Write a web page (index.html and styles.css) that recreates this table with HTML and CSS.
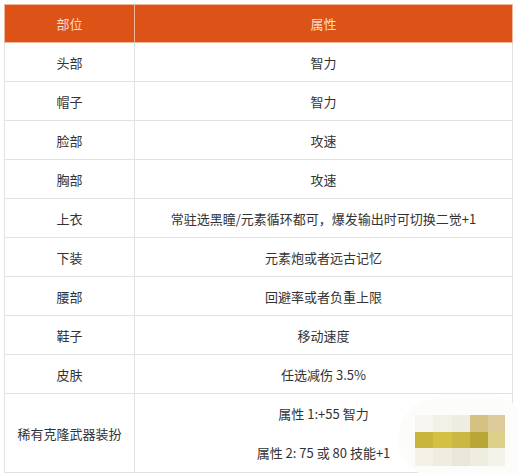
FILE: index.html
```html
<!DOCTYPE html>
<html lang="zh">
<head>
<meta charset="utf-8">
<title>装扮属性</title>
<link rel="stylesheet" href="styles.css">
</head>
<body>
<div class="wrap">
  <table class="attr">
    <thead>
      <tr><th class="c1">部位</th><th class="c2">属性</th></tr>
    </thead>
    <tbody>
      <tr><td>头部</td><td>智力</td></tr>
      <tr><td>帽子</td><td>智力</td></tr>
      <tr><td>脸部</td><td>攻速</td></tr>
      <tr><td>胸部</td><td>攻速</td></tr>
      <tr><td>上衣</td><td>常驻选黑瞳/元素循环都可，爆发输出时可切换二觉+1</td></tr>
      <tr><td>下装</td><td>元素炮或者远古记忆</td></tr>
      <tr><td>腰部</td><td>回避率或者负重上限</td></tr>
      <tr><td>鞋子</td><td>移动速度</td></tr>
      <tr><td>皮肤</td><td>任选减伤 3.5%</td></tr>
      <tr class="tall"><td>稀有克隆武器装扮</td><td><div class="line">属性 1:+55 智力</div><div class="line">属性 2: 75 或 80 技能+1</div></td></tr>
    </tbody>
  </table>
  <div class="blob"></div>
  <div class="mosaic">
    <span class="m m1"></span><span class="m m2"></span><span class="m m3"></span><span class="m m4"></span><span class="m m5"></span>
    <span class="m m6"></span><span class="m m7"></span><span class="m m8"></span><span class="m m9"></span><span class="m m10"></span>
    <span class="m m11"></span><span class="m m12"></span><span class="m m13"></span><span class="m m14"></span><span class="m m15"></span>
  </div>
</div>
</body>
</html>
```
FILE: styles.css
```css
html, body {
  margin: 0;
  padding: 0;
  background: #ffffff;
}
body {
  font-family: "Noto Sans CJK SC", "Noto Sans", sans-serif;
  font-size: 13px;
  color: #333333;
}
.wrap {
  position: relative;
  padding: 4px 0 0 4px;
  width: 509px;
}
.attr {
  width: 509px;
  border-collapse: collapse;
  table-layout: fixed;
}
.attr th {
  background: #dd5216;
  color: #fbdccb;
  font-weight: normal;
  height: 37px;
  padding: 0;
  border: 1px solid #f1b79a;
  text-align: center;
}
.attr th.c1 { width: 129px; }
.attr td {
  height: 38px;
  padding: 0;
  border: 1px solid #e2e2e2;
  text-align: center;
  vertical-align: middle;
}
.attr tr.tall td {
  height: 77px;
}
.line {
  height: 39px;
  line-height: 39px;
}
.blob {
  position: absolute;
  left: 398px;
  top: 398px;
  width: 121px;
  height: 80px;
  background: #fcfcfa;
  border-radius: 40px 20px 0 40px;
}
.mosaic {
  position: absolute;
  left: 415px;
  top: 415px;
  width: 90px;
  height: 51px;
  display: grid;
  grid-template-columns: 18px 19px 18px 18px 17px;
  grid-template-rows: 17px 16px 18px;
}
.m1 { background: #f6f5ef; }
.m2 { background: #f2f1e8; }
.m3 { background: #eeede2; }
.m4 { background: #d5c182; }
.m5 { background: #ddcb9b; }
.m6 { background: #c9b43c; }
.m7 { background: #d4c141; }
.m8 { background: #cab845; }
.m9 { background: #b9a636; }
.m10 { background: #ddd088; }
.m11 { background: #f4f2e6; }
.m12 { background: #efede0; }
.m13 { background: #e9e7d8; }
.m14 { background: #efeddf; }
.m15 { background: #f4f3ea; }
```
